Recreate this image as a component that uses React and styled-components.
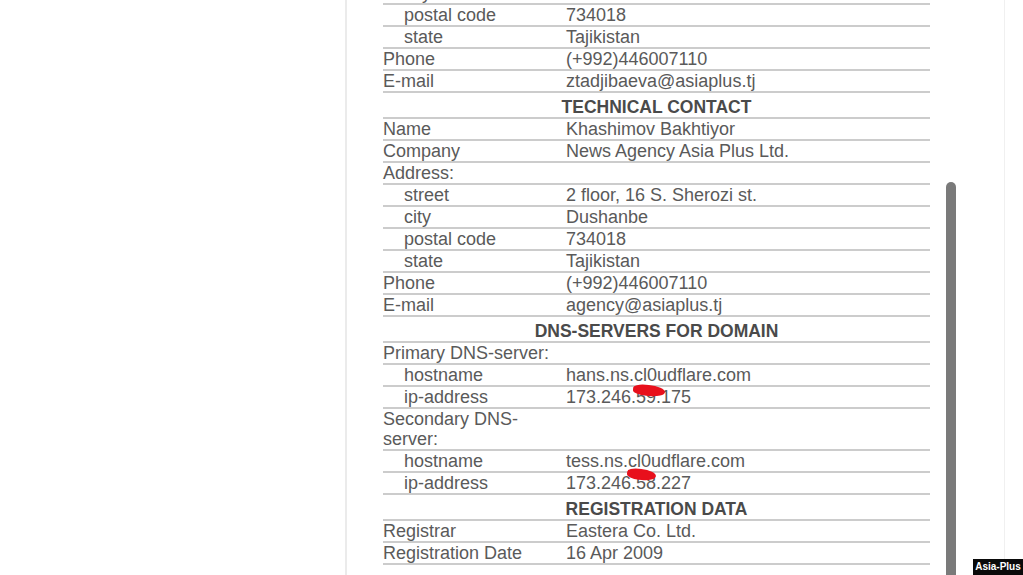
import React from "react";
import styled, { createGlobalStyle } from "styled-components";

const Global = createGlobalStyle`
  html, body { margin: 0; padding: 0; background: #ffffff; overflow: hidden; }
  body { font-family: "Liberation Sans", Arial, sans-serif; }
`;

const Page = styled.div`
  width: 1023px;
  height: 575px;
  display: flex;
  overflow: hidden;
  position: relative;
  background: #fff;
`;

const LeftSpace = styled.div`
  width: 345px;
  flex: none;
`;

const Panel = styled.div`
  width: 660px;
  flex: none;
  display: flex;
  border-left: 2px solid #ebebeb;
  border-right: 1px solid #f0f0f0;
  padding-left: 36px;
  box-sizing: border-box;
`;

const Table = styled.div`
  width: 547px;
  flex: none;
  margin-top: -17px;
  font-size: 18px;
  line-height: 20px;
  color: #5a5a5a;
`;

const Row = styled.div`
  display: grid;
  grid-template-columns: 183px 1fr;
  border-bottom: 2px solid #cccccc;
`;

const Label = styled.div`
  padding-left: ${(p) => (p.$indent ? "21px" : "0")};
  padding-right: 12px;
`;

const Value = styled.div`
  position: relative;
`;

const Head = styled.div`
  border-bottom: 2px solid #cccccc;
  padding-top: 4px;
  text-align: center;
  font-weight: bold;
  font-size: 17.5px;
  color: #4a4a4a;
`;

const Mark = styled.span`
  position: absolute;
  left: ${(p) => p.$x}px;
  top: ${(p) => p.$y}px;
  width: ${(p) => p.$w}px;
  height: ${(p) => p.$h}px;
  background: #e8101c;
  border-radius: 40% 55% 50% 45%;
  transform: rotate(${(p) => p.$r}deg);
  z-index: 2;
`;

const ScrollCol = styled.div`
  width: 10px;
  margin-left: 16px;
  flex: none;
  display: flex;
  flex-direction: column;
`;

const Thumb = styled.div`
  margin-top: 182px;
  flex: 1;
  background: #7a7a7a;
  border-radius: 5px 5px 0 0;
`;

const Watermark = styled.div`
  position: absolute;
  right: 0;
  bottom: 0;
  width: 50px;
  height: 16px;
  background: #0a0a0a;
  color: #fff;
  font-family: "Liberation Sans", Arial, sans-serif;
  font-weight: bold;
  font-size: 10px;
  line-height: 16px;
  text-align: center;
`;

const data = [
  { l: "city", v: "Dushanbe", i: true },
  { l: "postal code", v: "734018", i: true },
  { l: "state", v: "Tajikistan", i: true },
  { l: "Phone", v: "(+992)446007110" },
  { l: "E-mail", v: "ztadjibaeva@asiaplus.tj" },
  { h: "TECHNICAL CONTACT" },
  { l: "Name", v: "Khashimov Bakhtiyor" },
  { l: "Company", v: "News Agency Asia Plus Ltd." },
  { l: "Address:", v: "" },
  { l: "street", v: "2 floor, 16 S. Sherozi st.", i: true },
  { l: "city", v: "Dushanbe", i: true },
  { l: "postal code", v: "734018", i: true },
  { l: "state", v: "Tajikistan", i: true },
  { l: "Phone", v: "(+992)446007110" },
  { l: "E-mail", v: "agency@asiaplus.tj" },
  { h: "DNS-SERVERS FOR DOMAIN" },
  { l: "Primary DNS-server:", v: "" },
  { l: "hostname", v: "hans.ns.cl0udflare.com", i: true, m: { x: 67, y: 20, w: 32, h: 11, r: 5 } },
  { l: "ip-address", v: "173.246.59.175", i: true },
  { l: "Secondary DNS-server:", v: "" },
  { l: "hostname", v: "tess.ns.cl0udflare.com", i: true, m: { x: 61, y: 18, w: 29, h: 11, r: 6 } },
  { l: "ip-address", v: "173.246.58.227", i: true },
  { h: "REGISTRATION DATA" },
  { l: "Registrar", v: "Eastera Co. Ltd." },
  { l: "Registration Date", v: "16 Apr 2009" },
];

export default function App() {
  return (
    <>
      <Global />
      <Page>
        <LeftSpace />
        <Panel>
          <Table>
            {data.map((d, idx) =>
              d.h ? (
                <Head key={idx}>{d.h}</Head>
              ) : (
                <Row key={idx}>
                  <Label $indent={d.i}>{d.l}</Label>
                  <Value>
                    {d.v}
                    {d.m && <Mark $x={d.m.x} $y={d.m.y} $w={d.m.w} $h={d.m.h} $r={d.m.r} />}
                  </Value>
                </Row>
              )
            )}
          </Table>
          <ScrollCol>
            <Thumb />
          </ScrollCol>
        </Panel>
        <Watermark>Asia-Plus</Watermark>
      </Page>
    </>
  );
}
